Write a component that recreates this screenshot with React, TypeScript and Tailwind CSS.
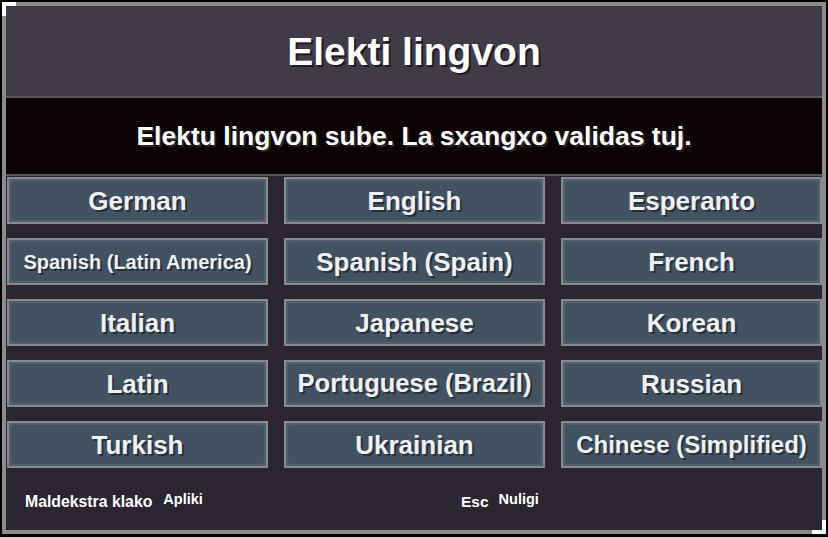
import React from 'react';

const LANGS: { label: string; size: string }[] = [
  { label: 'German', size: 'text-[26px]' },
  { label: 'English', size: 'text-[26px]' },
  { label: 'Esperanto', size: 'text-[26px]' },
  { label: 'Spanish (Latin America)', size: 'text-[20px]' },
  { label: 'Spanish (Spain)', size: 'text-[26px]' },
  { label: 'French', size: 'text-[26px]' },
  { label: 'Italian', size: 'text-[26px]' },
  { label: 'Japanese', size: 'text-[26px]' },
  { label: 'Korean', size: 'text-[26px]' },
  { label: 'Latin', size: 'text-[26px]' },
  { label: 'Portuguese (Brazil)', size: 'text-[25.5px]' },
  { label: 'Russian', size: 'text-[26px]' },
  { label: 'Turkish', size: 'text-[26px]' },
  { label: 'Ukrainian', size: 'text-[26px]' },
  { label: 'Chinese (Simplified)', size: 'text-[24px]' },
];

function LangButton({ label, size }: { label: string; size: string }) {
  return (
    <button
      type="button"
      className="h-[47px] border-2 border-[#878b90] bg-[#51606d] p-[2px]"
    >
      <div
        className={`flex h-full w-full items-center justify-center rounded-[4px] bg-[#435260] font-bold leading-none text-[#eef0f2] [text-shadow:2px_2px_0_rgba(15,18,24,0.55)] ${size}`}
      >
        {label}
      </div>
    </button>
  );
}

export default function App() {
  return (
    <div className="h-[537px] w-[828px] bg-black pt-[2px] pl-[2px] font-['Liberation_Sans',Arial,sans-serif]">
      <div className="relative h-[532px] w-[824px] border-4 border-[#8b8b8b] bg-[#2a2530]">
        {/* corner brackets */}
        <div className="pointer-events-none absolute -left-[4px] -top-[4px] h-[14px] w-[14px] border-l-4 border-t-4 border-white" />
        <div className="pointer-events-none absolute -bottom-[4px] -right-[4px] h-[14px] w-[14px] border-b-4 border-r-4 border-white" />

        <div className="flex h-[90px] items-center justify-center bg-[#413a47]">
          <h1 className="text-[39px] font-bold leading-none text-white [text-shadow:2px_2px_0_rgba(0,0,0,0.55)]">
            Elekti lingvon
          </h1>
        </div>
        <div className="h-[2px] bg-[#5b5561]" />
        <div className="flex h-[76px] items-center justify-center bg-[#0b0204]">
          <p className="text-[26.5px] font-bold leading-none text-white [text-shadow:2px_2px_0_rgba(60,60,60,0.6)]">
            Elektu lingvon sube. La sxangxo validas tuj.
          </p>
        </div>
        <div className="h-[2px] bg-[#57535b]" />

        <div className="mt-px grid grid-cols-3 gap-x-4 gap-y-[14px] pl-px">
          {LANGS.map((l) => (
            <LangButton key={l.label} label={l.label} size={l.size} />
          ))}
        </div>

        <div className="flex h-[61px] items-center pt-[6px] text-white">
          <div className="flex w-[455px] items-center gap-[11px] pl-[19px]">
            <span className="text-[15.8px] font-bold">Maldekstra klako</span>
            <span className="-mt-[3px] text-[14.5px] font-bold">Apliki</span>
          </div>
          <div className="flex items-center gap-[10px]">
            <span className="text-[15.5px] font-bold">Esc</span>
            <span className="-mt-[3px] text-[14.5px] font-bold">Nuligi</span>
          </div>
        </div>
      </div>
    </div>
  );
}
